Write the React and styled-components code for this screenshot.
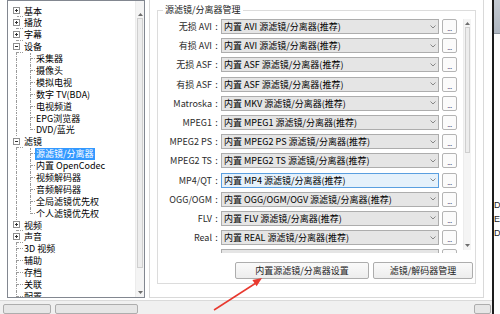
import React from "react";
import styled, { createGlobalStyle } from "styled-components";

const GlobalStyle = createGlobalStyle`
  html, body {
    margin: 0;
    padding: 0;
    background: #fff;
  }
  body {
    width: 500px;
    height: 314px;
    overflow: hidden;
    font-family: "Noto Sans CJK SC", "Noto Sans", sans-serif;
    font-size: 9px;
    color: #000;
  }
`;

const Screen = styled.div`
  position: relative;
  display: flex;
  width: 500px;
  height: 314px;
  overflow: hidden;
`;

const Dialog = styled.div`
  width: 492px;
  display: flex;
  flex-direction: column;
`;

const Body = styled.div`
  height: 308px;
  display: flex;
  align-items: flex-start;
  gap: 4px;
  padding-left: 7px;
`;

/* ---------- tree ---------- */

const TreeBox = styled.div`
  width: 138px;
  height: 298px;
  box-sizing: border-box;
  border: 1px solid #828790;
  display: flex;
  background: #fff;
`;

const TreeList = styled.div`
  flex: 1;
  overflow: hidden;
  padding-top: 4.5px;
`;

const TreeRow = styled.div`
  display: flex;
  height: 11.9px;
  line-height: 11.9px;
`;

const Branch = styled.div`
  flex: none;
  display: grid;
  grid-template-columns: ${(p) => p.$left}px ${(p) => p.$right}px;
  grid-template-rows: 1fr 1fr;
`;

const Seg = styled.span`
  box-sizing: border-box;
  border-right: ${(p) => (p.$v ? "1px dotted #9a9a9a" : "none")};
  border-bottom: ${(p) => (p.$h ? "1px dotted #9a9a9a" : "none")};
`;

const Expander = styled.svg`
  grid-area: 1 / 1 / 3 / 3;
  align-self: center;
  justify-self: start;
  margin-left: 5px;
  width: 7px;
  height: 7px;
  z-index: 1;
`;

const NodeLabel = styled.span`
  padding: 0 1px;
  white-space: nowrap;
  color: ${(p) => (p.$selected ? "#fff" : "#000")};
  background: ${(p) => (p.$selected ? "#3399ff" : "transparent")};
`;

const Scroll = styled.div`
  flex: none;
  width: ${(p) => p.$w}px;
  height: ${(p) => (p.$h ? `${p.$h}px` : "auto")};
  display: flex;
  flex-direction: column;
  background: #f4f4f4;
  box-sizing: border-box;
  border-left: 1px solid #ececec;
`;

const ScrollArrow = styled.div`
  flex: none;
  height: ${(p) => p.$h}px;
  display: flex;
  justify-content: center;
  align-items: ${(p) => p.$align};
  padding: 2px 0;
  box-sizing: border-box;
`;

const Thumb = styled.div`
  flex: none;
  height: ${(p) => p.$h}px;
  margin: 0 1px;
  box-sizing: border-box;
  border: 1px solid #cfcfcf;
  background: #ededed;
`;

const Track = styled.div`
  flex: 1;
`;

const Tri = ({ down }) => (
  <svg width="5" height="3" viewBox="0 0 5 3">
    <path d={down ? "M0 0h5L2.5 3z" : "M0 3h5L2.5 0z"} fill="#6d6d6d" />
  </svg>
);

const ScrollBar = ({ w, h, up, thumb, down }) => (
  <Scroll $w={w} $h={h}>
    <ScrollArrow $h={up} $align="flex-end">
      <Tri />
    </ScrollArrow>
    <Thumb $h={thumb} />
    <Track />
    <ScrollArrow $h={down} $align="center">
      <Tri down />
    </ScrollArrow>
  </Scroll>
);

const tree = [
  { label: "基本", box: "+" },
  { label: "播放", box: "+" },
  { label: "字幕", box: "+" },
  { label: "设备", box: "-" },
  { label: "采集器", child: true },
  { label: "摄像头", child: true },
  { label: "模拟电视", child: true },
  { label: "数字 TV(BDA)", child: true },
  { label: "电视频道", child: true },
  { label: "EPG浏览器", child: true },
  { label: "DVD/蓝光", child: true, last: true },
  { label: "滤镜", box: "-" },
  { label: "源滤镜/分离器", child: true, selected: true },
  { label: "内置 OpenCodec", child: true },
  { label: "视频解码器", child: true },
  { label: "音频解码器", child: true },
  { label: "全局滤镜优先权", child: true },
  { label: "个人滤镜优先权", child: true, last: true },
  { label: "视频", box: "+" },
  { label: "声音", box: "+" },
  { label: "3D 视频" },
  { label: "辅助" },
  { label: "存档" },
  { label: "关联" },
  { label: "配置" },
];

const TreeNode = ({ node, first }) => (
  <TreeRow>
    {node.child ? (
      <>
        <Branch $left={9} $right={6}>
          <Seg $v />
          <Seg />
          <Seg $v />
          <Seg />
        </Branch>
        <Branch $left={8} $right={4}>
          <Seg $v />
          <Seg $h />
          <Seg $v={!node.last} />
          <Seg />
        </Branch>
      </>
    ) : (
      <Branch $left={9} $right={6}>
        <Seg $v={!first} />
        <Seg $h />
        <Seg $v />
        <Seg />
        {node.box && (
          <Expander viewBox="0 0 7 7">
            <rect x="0.5" y="0.5" width="6" height="6" fill="#fff" stroke="#8f8f8f" />
            <path d="M2 3.5h3" stroke="#333" />
            {node.box === "+" && <path d="M3.5 2v3" stroke="#333" />}
          </Expander>
        )}
      </Branch>
    )}
    <NodeLabel $selected={node.selected}>{node.label}</NodeLabel>
  </TreeRow>
);

/* ---------- right panel ---------- */

const OuterPanel = styled.div`
  width: 335px;
  height: 298px;
  box-sizing: border-box;
  border: 1px solid #d9d9d9;
  border-top: none;
  padding: 10px 7px 0 7px;
`;

const GroupBox = styled.div`
  border: 1px solid #dcdcdc;
  padding-bottom: 4px;
`;

const GroupTitle = styled.div`
  width: fit-content;
  margin: -7px 0 0 5px;
  padding: 0 2px;
  line-height: 12px;
  background: #fff;
  color: #222;
`;

const RowsArea = styled.div`
  margin-top: 3px;
  display: flex;
  align-items: flex-start;
  gap: 6px;
  padding-right: 4px;
`;

const RowsList = styled.div`
  width: 299px;
  height: 234px;
  overflow: hidden;
  display: flex;
  flex-direction: column;
  gap: 4.2px;
`;

const Row = styled.div`
  flex: none;
  display: flex;
  align-items: center;
  height: 15px;
`;

const RowLabel = styled.span`
  width: 54px;
  text-align: right;
  white-space: nowrap;
  color: #2b2b2b;
`;

const Colon = styled.span`
  width: 9px;
  text-align: center;
  color: #2b2b2b;
`;

const Combo = styled.div`
  width: 218px;
  height: 15px;
  box-sizing: border-box;
  border: 1px solid ${(p) => (p.$hot ? "#5a9fe0" : "#adadad")};
  background: ${(p) => (p.$hot ? "#e5f1fb" : "#e5e5e5")};
  display: flex;
  align-items: center;
  padding: 0 2px;
`;

const ComboText = styled.span`
  flex: 1;
  white-space: nowrap;
  overflow: hidden;
  line-height: 13px;
`;

const MoreButton = styled.div`
  margin-left: 3px;
  width: 15px;
  height: 15px;
  box-sizing: border-box;
  border: 1px solid #b4b4b4;
  border-radius: 2px;
  background: #fbfbfb;
  display: flex;
  justify-content: center;
  align-items: flex-end;
  font-size: 7px;
  line-height: 10px;
  letter-spacing: -0.5px;
  color: #3a3a6a;
`;

const ButtonBar = styled.div`
  margin-top: 9px;
  display: flex;
  justify-content: flex-end;
  gap: 4px;
  padding-right: 2px;
`;

const PushButton = styled.div`
  width: ${(p) => p.$w}px;
  height: 17px;
  box-sizing: border-box;
  border: 1px solid #adadad;
  border-radius: 2px;
  background: linear-gradient(#fafafa, #ededed);
  display: flex;
  justify-content: center;
  align-items: center;
  color: #222;
`;

const Chevron = () => (
  <svg width="6" height="4" viewBox="0 0 6 4">
    <path d="M0.5 0.5L3 3L5.5 0.5" fill="none" stroke="#7a7a7a" strokeWidth="0.9" />
  </svg>
);

// the last entry is scrolled mostly out of view: only its top edge shows
const splitters = [
  ["无损 AVI", "内置 AVI 源滤镜/分离器(推荐)"],
  ["有损 AVI", "内置 AVI 源滤镜/分离器(推荐)"],
  ["无损 ASF", "内置 ASF 源滤镜/分离器(推荐)"],
  ["有损 ASF", "内置 ASF 源滤镜/分离器(推荐)"],
  ["Matroska", "内置 MKV 源滤镜/分离器(推荐)"],
  ["MPEG1", "内置 MPEG1 源滤镜/分离器(推荐)"],
  ["MPEG2 PS", "内置 MPEG2 PS 源滤镜/分离器(推荐)"],
  ["MPEG2 TS", "内置 MPEG2 TS 源滤镜/分离器(推荐)"],
  ["MP4/QT", "内置 MP4 源滤镜/分离器(推荐)", true],
  ["OGG/OGM", "内置 OGG/OGM/OGV 源滤镜/分离器(推荐)"],
  ["FLV", "内置 FLV 源滤镜/分离器(推荐)"],
  ["Real", "内置 REAL 源滤镜/分离器(推荐)"],
  ["", ""],
];

/* ---------- bottom strip and neighbour window ---------- */

const BottomBar = styled.div`
  flex: 1;
  border-top: 1px solid #dadada;
  background: #f0f0f0;
  display: flex;
  gap: 4px;
  padding: 3px 0 0 3px;
`;

const StubButton = styled.div`
  width: ${(p) => p.$w}px;
  margin-left: ${(p) => p.$ml || 0}px;
  height: 10px;
  box-sizing: border-box;
  border: 1px solid #adadad;
  border-radius: 2px;
  background: #e6e6e6;
`;

const Neighbour = styled.div`
  flex: 1;
  border-left: 2px solid #1b1b1b;
  display: flex;
  flex-direction: column;
  background: #fdfdfd;
  overflow: hidden;
`;

const NeighbourHead = styled.div`
  height: 33px;
  background: linear-gradient(#c4cad2, #aeb6c0);
  border-bottom: 1px solid #8b949e;
`;

const NeighbourText = styled.div`
  margin-top: 164px;
  line-height: 14px;
  font-family: "Liberation Sans", sans-serif;
  font-size: 9px;
  color: #222;
`;

const ArrowLayer = styled.svg`
  position: absolute;
  left: 0;
  top: 0;
  pointer-events: none;
`;

export default function App() {
  return (
    <>
      <GlobalStyle />
      <Screen>
        <Dialog>
          <Body>
            <TreeBox>
              <TreeList>
                {tree.map((node, i) => (
                  <TreeNode key={node.label} node={node} first={i === 0} />
                ))}
              </TreeList>
              <ScrollBar w={9} up={17} thumb={250} down={9} />
            </TreeBox>

            <OuterPanel>
              <GroupBox>
                <GroupTitle>源滤镜/分离器管理</GroupTitle>
                <RowsArea>
                  <RowsList>
                    {splitters.map(([name, value, hot], i) => (
                      <Row key={i}>
                        <RowLabel>{name}</RowLabel>
                        <Colon>{name && ":"}</Colon>
                        <Combo $hot={hot}>
                          <ComboText>{value}</ComboText>
                          <Chevron />
                        </Combo>
                        <MoreButton>{name && "..."}</MoreButton>
                      </Row>
                    ))}
                  </RowsList>
                  <ScrollBar w={8} h={231} up={8} thumb={126} down={9} />
                </RowsArea>
                <ButtonBar>
                  <PushButton $w={134}>内置源滤镜/分离器设置</PushButton>
                  <PushButton $w={100}>滤镜/解码器管理</PushButton>
                </ButtonBar>
              </GroupBox>
            </OuterPanel>
          </Body>
          <BottomBar>
            <StubButton $w={48} />
            <StubButton $w={83} />
            <StubButton $w={17} $ml={332} />
          </BottomBar>
        </Dialog>
        <Neighbour>
          <NeighbourHead />
          <NeighbourText>
            D<br />E<br />D
          </NeighbourText>
        </Neighbour>
        <ArrowLayer width="500" height="314" viewBox="0 0 500 314">
          <line x1="214" y1="310" x2="256" y2="283" stroke="#e8392f" strokeWidth="1.5" />
          <polygon points="262,278 256.6,286.2 252.4,280" fill="#e8392f" />
        </ArrowLayer>
      </Screen>
    </>
  );
}
